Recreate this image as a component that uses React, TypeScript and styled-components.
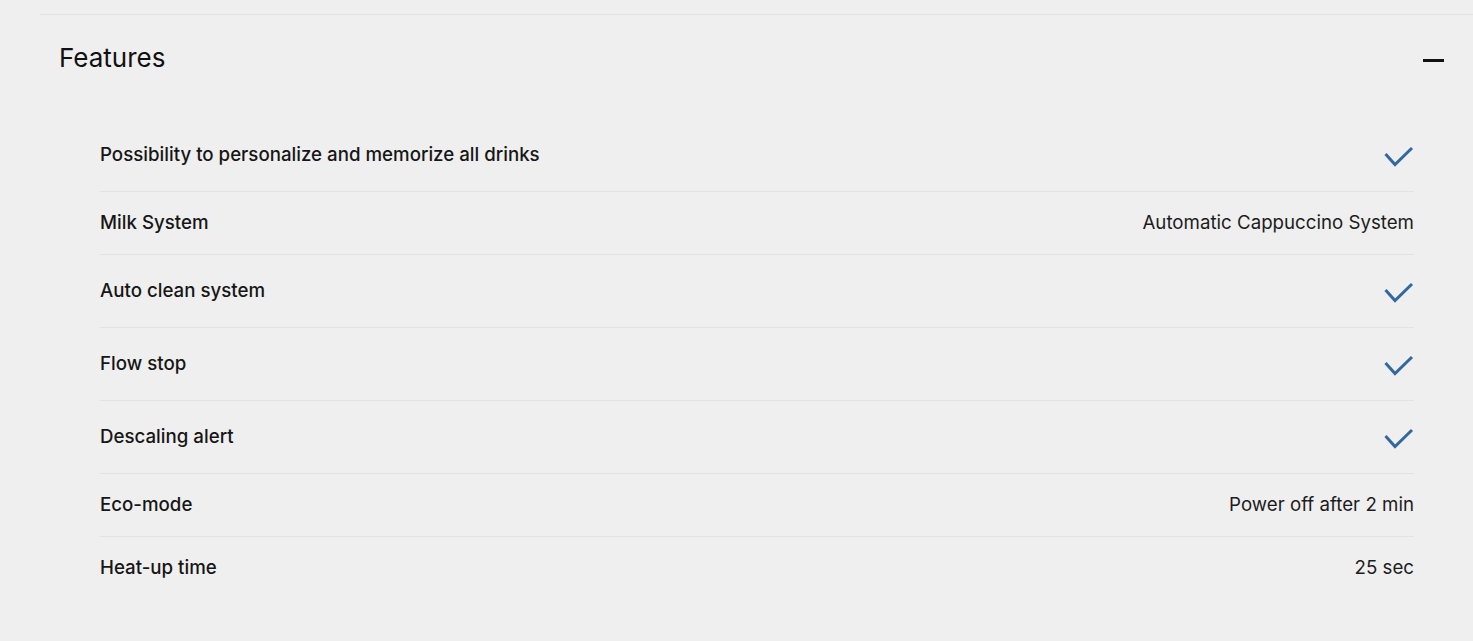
import styled, { createGlobalStyle } from "styled-components";

const GlobalStyle = createGlobalStyle`
  html, body {
    margin: 0;
    padding: 0;
    background: #efefef;
  }
  body {
    font-family: Inter, "Liberation Sans", Arial, sans-serif;
    color: #1a1a1a;
  }
`;

const Page = styled.div`
  padding-top: 14px;
  min-height: 641px;
  box-sizing: border-box;
`;

const Section = styled.section`
  margin-left: 40px;
  border-top: 1px solid #e2e2e2;
`;

const Header = styled.div`
  height: 84px;
  display: flex;
  align-items: center;
  justify-content: space-between;
  padding: 2px 29px 0 19px;
  box-sizing: border-box;
`;

const Title = styled.h2`
  margin: 0;
  font-size: 26px;
  font-weight: 400;
  line-height: 34px;
  color: #111;
`;

const Collapse = styled.button`
  width: 21px;
  height: 21px;
  padding: 0;
  margin-top: 4px;
  border: 0;
  background: transparent;
  display: flex;
  align-items: center;
  cursor: pointer;
  &::before {
    content: "";
    display: block;
    width: 21px;
    height: 3px;
    background: #111;
  }
`;

const List = styled.ul`
  list-style: none;
  margin: 0;
  padding: 20px 59px 0 60px;
`;

const Row = styled.li`
  display: flex;
  align-items: center;
  justify-content: space-between;
  padding: 20px 0;
  border-bottom: 1px solid #e2e2e2;
  &:last-child {
    border-bottom: 0;
  }
`;

const Label = styled.span`
  font-size: 18.7px;
  font-weight: 500;
  line-height: 22px;
  color: #161616;
  margin-top: -1px;
`;

const Value = styled.span`
  font-size: 18.7px;
  font-weight: 400;
  line-height: 22px;
  color: #1c1c1c;
`;

const Check = styled.svg`
  width: 32px;
  height: 32px;
  display: block;
`;

interface IFeature {
  label: string;
  value?: string;
}

const features: IFeature[] = [
  { label: "Possibility to personalize and memorize all drinks" },
  { label: "Milk System", value: "Automatic Cappuccino System" },
  { label: "Auto clean system" },
  { label: "Flow stop" },
  { label: "Descaling alert" },
  { label: "Eco-mode", value: "Power off after 2 min" },
  { label: "Heat-up time", value: "25 sec" },
];

function CheckIcon() {
  return (
    <Check viewBox="0 0 32 32" fill="none">
      <path
        d="M3.5 15 L13 25.5 L30 9"
        stroke="#33679f"
        strokeWidth="3"
        strokeLinecap="butt"
        strokeLinejoin="miter"
      />
    </Check>
  );
}

function App() {
  return (
    <Page>
      <GlobalStyle />
      <Section>
        <Header>
          <Title>Features</Title>
          <Collapse aria-label="Collapse" />
        </Header>
        <List>
          {features.map((f) => (
            <Row key={f.label}>
              <Label>{f.label}</Label>
              {f.value ? <Value>{f.value}</Value> : <CheckIcon />}
            </Row>
          ))}
        </List>
      </Section>
    </Page>
  );
}

export default App;
